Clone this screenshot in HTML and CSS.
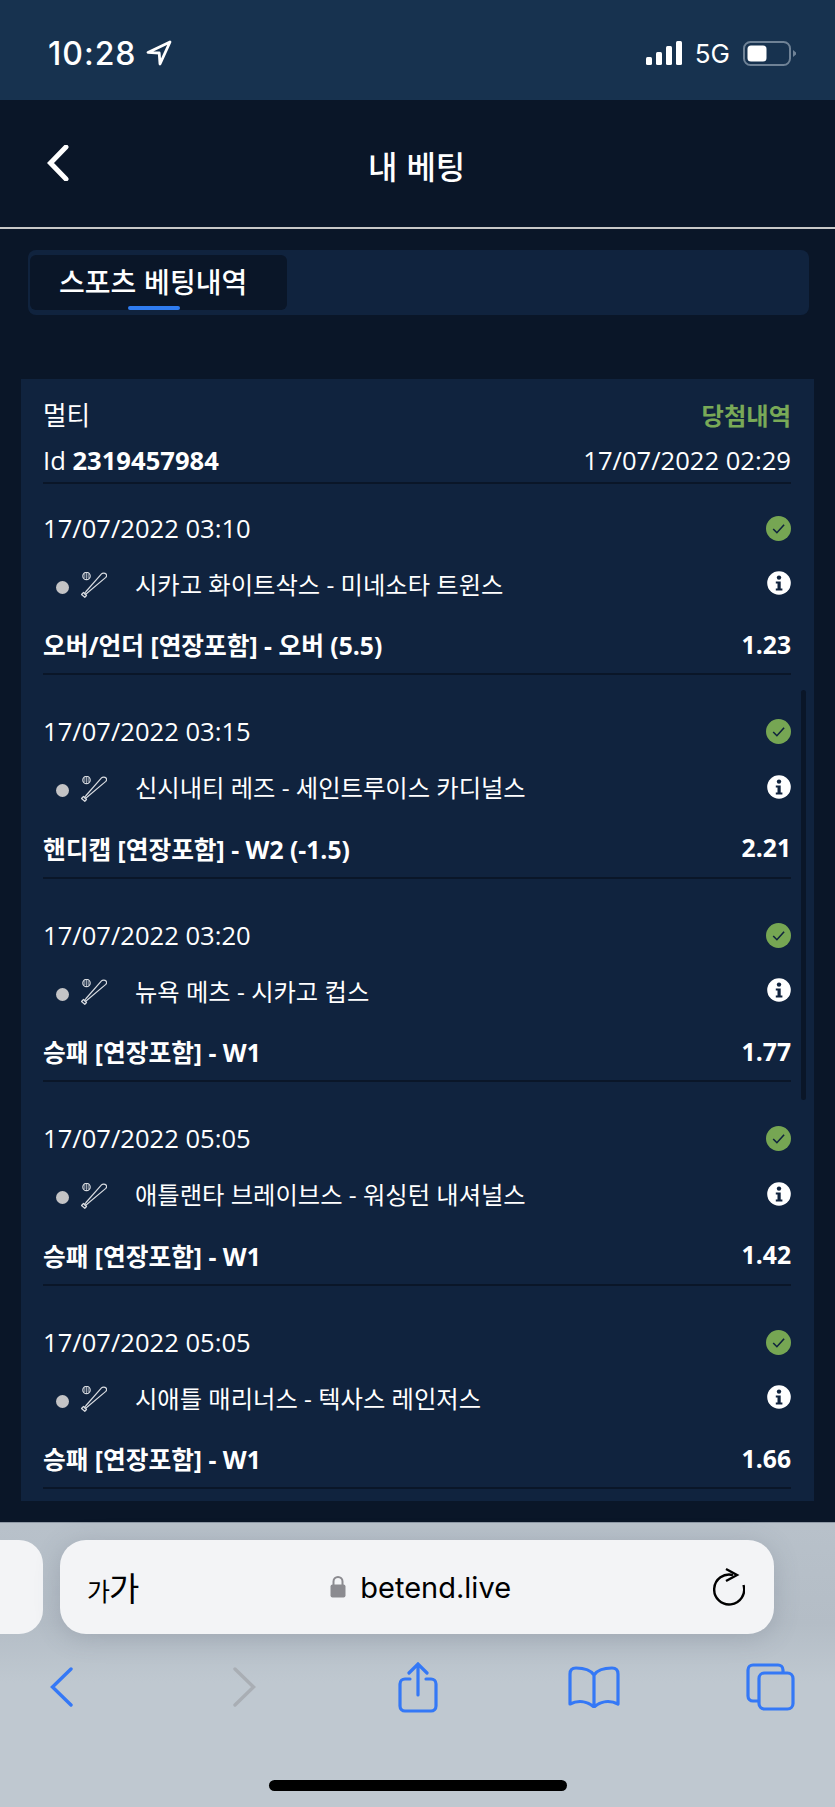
FILE: index.html
```html
<!DOCTYPE html>
<html lang="ko">
<head>
  <meta charset="UTF-8">
  <title>내 베팅</title>
  <link rel="stylesheet" href="styles.css">
</head>
<body>
  <svg class="defs" width="0" height="0">
    <symbol id="bat" viewBox="0 0 26 26">
      <circle cx="5.500" cy="4" r="3.700" fill="none" stroke="#d8dbe0" stroke-width="1.200"/>
      <path d="M5.500 .8v6.400M3.800 1.800v4.400M7.200 1.800v4.400" stroke="#d8dbe0" stroke-width=".7"/>
      <path d="M20.500 1.800C21.500.8 24 .8 25 2c.8 1 .6 2.500-.2 3.400L6.500 20.800l-1.900 1.700-1.100-1.100L5 19.500z" fill="none" stroke="#d8dbe0" stroke-width="1.200" stroke-linejoin="round"/>
      <path d="M2.500 20.500l3 3-1.700 1.800-3.300-2.800z" fill="none" stroke="#d8dbe0" stroke-width="1.200" stroke-linejoin="round"/>
    </symbol>
    <symbol id="check" viewBox="0 0 25 25">
      <circle cx="12.500" cy="12.500" r="12.500" fill="#76a653"/>
      <path d="M7.200 13l3.700 3.700 7.200-8" fill="none" stroke="#10233e" stroke-width="1.600"/>
    </symbol>
    <symbol id="info" viewBox="0 0 24 24">
      <circle cx="12" cy="12" r="11.800" fill="#fff"/>
      <circle cx="12" cy="6.600" r="2.200" fill="#10233e"/>
      <path d="M8.800 10.400h4.900v7h1.700v2.200H8.800v-2.200h1.700v-4.800H8.800z" fill="#10233e"/>
    </symbol>
  </svg>

  <div class="status-bar">
    <div class="status-left">
      <span class="time">10:28</span>
      <svg class="loc" width="26" height="26" viewBox="0 0 26 26"><path d="M24 2L2 12.400l11.200.6.800 11z" fill="none" stroke="#fff" stroke-width="2.800" stroke-linejoin="round"/></svg>
    </div>
    <div class="status-right">
      <svg width="36" height="24" viewBox="0 0 36 24"><rect x="0" y="16" width="6" height="8" rx="1.500" fill="#fff"/><rect x="10" y="11" width="6" height="13" rx="1.500" fill="#fff"/><rect x="20" y="5" width="6" height="19" rx="1.500" fill="#fff"/><rect x="30" y="0" width="6" height="24" rx="1.500" fill="#fff"/></svg>
      <span class="net">5G</span>
      <svg width="53" height="25" viewBox="0 0 53 25"><rect x="1" y="1" width="46" height="23" rx="6.500" fill="none" stroke="#6f8296" stroke-width="2"/><rect x="4.500" y="4.500" width="19" height="16" rx="3.500" fill="#fff"/><path d="M50 9l3 2.500v2L50 16z" fill="#6f8296"/></svg>
    </div>
  </div>

  <div class="nav">
    <svg class="nav-back" width="22" height="36" viewBox="0 0 22 36"><path d="M19 2L3.500 18 19 34" fill="none" stroke="#fff" stroke-width="5" stroke-linecap="round"/></svg>
    <div class="nav-title">내 베팅</div>
  </div>

  <div class="page">
    <div class="tabs">
      <div class="tab">스포츠 베팅내역<span class="tab-bar"></span></div>
    </div>

    <div class="card">
      <div class="scroll-thumb"></div>
      <div class="card-row type-row">
        <span>멀티</span>
        <span class="won">당첨내역</span>
      </div>
      <div class="card-row id-row">
        <span>Id <b>2319457984</b></span>
        <span>17/07/2022 02:29</span>
      </div>

      <div class="bet">
        <div class="bet-row date-row"><span>17/07/2022 03:10</span><svg class="status-icon"><use href="#check"/></svg></div>
        <div class="bet-row match">
          <span class="dot"></span><svg class="bat"><use href="#bat"/></svg>
          <span class="teams">시카고 화이트삭스 - 미네소타 트윈스</span>
          <svg class="info-icon"><use href="#info"/></svg>
        </div>
        <div class="bet-row market"><span>오버/언더 [연장포함] - 오버 (5.5)</span><span>1.23</span></div>
      </div>

      <div class="bet">
        <div class="bet-row date-row"><span>17/07/2022 03:15</span><svg class="status-icon"><use href="#check"/></svg></div>
        <div class="bet-row match">
          <span class="dot"></span><svg class="bat"><use href="#bat"/></svg>
          <span class="teams">신시내티 레즈 - 세인트루이스 카디널스</span>
          <svg class="info-icon"><use href="#info"/></svg>
        </div>
        <div class="bet-row market"><span>핸디캡 [연장포함] - W2 (-1.5)</span><span>2.21</span></div>
      </div>

      <div class="bet">
        <div class="bet-row date-row"><span>17/07/2022 03:20</span><svg class="status-icon"><use href="#check"/></svg></div>
        <div class="bet-row match">
          <span class="dot"></span><svg class="bat"><use href="#bat"/></svg>
          <span class="teams">뉴욕 메츠 - 시카고 컵스</span>
          <svg class="info-icon"><use href="#info"/></svg>
        </div>
        <div class="bet-row market"><span>승패 [연장포함] - W1</span><span>1.77</span></div>
      </div>

      <div class="bet">
        <div class="bet-row date-row"><span>17/07/2022 05:05</span><svg class="status-icon"><use href="#check"/></svg></div>
        <div class="bet-row match">
          <span class="dot"></span><svg class="bat"><use href="#bat"/></svg>
          <span class="teams">애틀랜타 브레이브스 - 워싱턴 내셔널스</span>
          <svg class="info-icon"><use href="#info"/></svg>
        </div>
        <div class="bet-row market"><span>승패 [연장포함] - W1</span><span>1.42</span></div>
      </div>

      <div class="bet">
        <div class="bet-row date-row"><span>17/07/2022 05:05</span><svg class="status-icon"><use href="#check"/></svg></div>
        <div class="bet-row match">
          <span class="dot"></span><svg class="bat"><use href="#bat"/></svg>
          <span class="teams">시애틀 매리너스 - 텍사스 레인저스</span>
          <svg class="info-icon"><use href="#info"/></svg>
        </div>
        <div class="bet-row market"><span>승패 [연장포함] - W1</span><span>1.66</span></div>
      </div>
    </div>
  </div>

  <div class="browser">
    <div class="address-row">
      <div class="prev-pill"></div>
      <div class="address">
        <span class="aa"><span class="aa-small">가</span>가</span>
        <div class="url">
          <svg width="16" height="24" viewBox="0 0 16 24"><path d="M3.500 10V6.500a4.500 4.500 0 0 1 9 0V10" fill="none" stroke="#8b8b90" stroke-width="2"/><rect x="0.500" y="9.500" width="15" height="13" rx="2" fill="#8b8b90"/></svg>
          <span>betend.live</span>
        </div>
        <svg width="32" height="40" viewBox="0 0 32 40"><path d="M20 8A15 15 0 1 0 30.500 18" fill="none" stroke="#000" stroke-width="2.400"/><path d="M13 2l11 6-11 6" fill="none" stroke="#000" stroke-width="2.400"/></svg>
      </div>
    </div>
    <div class="toolbar">
      <svg class="tool-back" width="23" height="40" viewBox="0 0 23 40"><path d="M21 2L2.500 20 21 38" fill="none" stroke="#3478f6" stroke-width="3.400" stroke-linecap="round"/></svg>
      <svg class="tool-forward" width="23" height="40" viewBox="0 0 23 40"><path d="M2 2l18.500 18L2 38" fill="none" stroke="#a9aeb4" stroke-width="3.400" stroke-linecap="round"/></svg>
      <svg class="tool-share" width="40" height="51" viewBox="0 0 40 51"><path d="M12 17H7a5 5 0 0 0-5 5v22a5 5 0 0 0 5 5h26a5 5 0 0 0 5-5V22a5 5 0 0 0-5-5h-5M20 33V2M11 11l9-9 9 9" fill="none" stroke="#3478f6" stroke-width="3.200" stroke-linecap="round"/></svg>
      <svg class="tool-book" width="52" height="42" viewBox="0 0 52 42"><path d="M26 9C22 3 14 2 8 2 4 2 2 4 2 8v30c8-4 17-3 24 3 7-6 16-7 24-3V8c0-4-2-6-6-6-6 0-14 1-18 7zM26 9v31" fill="none" stroke="#3478f6" stroke-width="3.200" stroke-linejoin="round"/></svg>
      <svg class="tool-tabs" width="49" height="48" viewBox="0 0 49 48"><path d="M37 9V7a5 5 0 0 0-5-5H7a5 5 0 0 0-5 5v26a5 5 0 0 0 5 5h5" fill="none" stroke="#3478f6" stroke-width="3.200"/><rect x="13" y="10" width="34" height="36" rx="5.500" fill="none" stroke="#3478f6" stroke-width="3.200"/></svg>
    </div>
    <div class="home-indicator"></div>
  </div>
</body>
</html>
```

FILE: styles.css
```css
* {
  box-sizing: border-box;
}
html, body {
  margin: 0;
  height: 1807px;
  overflow: hidden;
}
body {
  display: flex;
  flex-direction: column;
  background-color: #0a1628;
  color: #fff;
  font-family: "Open Sans", "Noto Sans CJK KR", sans-serif;
  font-size: 25.6px;
}
svg {
  display: block;
  flex: none;
}
.defs {
  position: absolute;
}

.status-bar {
  height: 100px;
  background-color: #17324f;
  display: flex;
  align-items: center;
  justify-content: space-between;
  padding: 6px 39px 0 48px;
}
.status-left, .status-right {
  display: flex;
  align-items: center;
}
.time {
  font-family: Inter, sans-serif;
  font-size: 32px;
  font-weight: 500;
  letter-spacing: 1px;
}
.loc {
  margin-left: 9px;
}
.net {
  font-family: Inter, sans-serif;
  font-size: 26px;
  margin: 0 13px;
}

.nav {
  height: 129px;
  display: flex;
  align-items: center;
  padding-left: 47px;
  border-bottom: 2px solid #c8c8c8;
}
.nav-title {
  margin-left: 299px;
  font-family: "Noto Sans CJK KR", sans-serif;
  font-size: 32px;
  font-weight: 500;
  padding-top: 2px;
}
.nav-back {
  margin-top: -2px;
}

.page {
  flex: none;
  height: 1293px;
  padding: 21px 21px 0;
}
.tabs {
  height: 65px;
  margin: 0 5px 0 7px;
  padding: 5px 2px;
  background-color: #10233e;
  border-radius: 8px;
}
.tab {
  position: relative;
  width: 257px;
  height: 55px;
  padding-left: 29px;
  background-color: #0a1628;
  border-radius: 6px;
  font-family: "Noto Sans CJK KR", sans-serif;
  font-size: 28px;
  font-weight: 500;
  line-height: 53px;
}
.tab-bar {
  position: absolute;
  left: 98px;
  bottom: 0;
  width: 52px;
  height: 4px;
  border-radius: 2px;
  background-color: #2f7cf0;
}

.card {
  position: relative;
  margin-top: 64px;
  height: 1122px;
  padding: 16px 23px 12px 22px;
  background-color: #10233e;
}
.scroll-thumb {
  position: absolute;
  right: 8px;
  top: 311px;
  width: 5px;
  height: 410px;
  border-radius: 3px;
  background-color: #0a1628;
}
.card-row, .bet-row {
  display: flex;
  align-items: center;
  justify-content: space-between;
  height: 40px;
  padding-bottom: 4px;
}
.type-row, .date-row {
  padding-bottom: 2px;
}
.won {
  color: #79a957;
  font-weight: 700;
  font-size: 24.300px;
}
.id-row {
  margin-top: 7px;
  height: 42px;
  border-bottom: 2px solid #0a1628;
}
.id-row b {
  font-weight: 700;
}

.bet {
  padding: 24px 0 7px;
  margin-top: 1px;
  border-bottom: 2px solid #0a1628;
}
.bet + .bet {
  margin-top: 0;
  padding-top: 37.500px;
}
.status-icon {
  width: 25px;
  height: 25px;
}
.match {
  margin-top: 16px;
  justify-content: flex-start;
  font-size: 24.300px;
}
.dot {
  width: 13px;
  height: 13px;
  margin: 8px 12px 0 13px;
  border-radius: 50%;
  background-color: #c4c4c6;
}
.bat {
  width: 26px;
  height: 26px;
  margin-top: 4px;
}
.teams {
  margin-left: 28px;
}
.info-icon {
  width: 24px;
  height: 24px;
  margin-left: auto;
}
.market {
  margin-top: 21px;
  font-weight: 700;
  font-size: 24.700px;
}

.browser {
  flex: 1;
  background: linear-gradient(#b8c1ca, #b4bdc6 100px, #bfc8d0 160px);
  padding-top: 17px;
  border-top: 1px solid #8f99a5;
}
.address-row {
  display: flex;
  gap: 17px;
}
.prev-pill {
  width: 43px;
  height: 94px;
  background-color: #f3f4f6;
  border-radius: 0 24px 24px 0;
}
.address {
  width: 714px;
  height: 94px;
  display: flex;
  align-items: center;
  justify-content: space-between;
  padding: 0 29px 0 27px;
  background-color: #f3f4f6;
  border-radius: 26px;
  box-shadow: 0 4px 24px rgba(90, 100, 115, 0.25);
  color: #000;
}
.aa {
  font-family: "Noto Sans CJK KR", sans-serif;
  font-size: 33px;
  font-weight: 400;
  letter-spacing: -1px;
}
.aa-small {
  font-size: 25px;
}
.url {
  display: flex;
  align-items: center;
  gap: 14px;
  margin-left: -10px;
  font-family: Inter, sans-serif;
  font-size: 29px;
}
.toolbar {
  display: flex;
  align-items: center;
  height: 52px;
  margin-top: 27px;
  padding-left: 50px;
}
.tool-forward {
  margin-left: 160px;
}
.tool-share {
  margin-left: 142px;
}
.tool-book {
  margin-left: 130px;
}
.tool-tabs {
  margin-left: 126px;
}
.home-indicator {
  width: 298px;
  height: 11px;
  margin: 67px auto 0;
  border-radius: 6px;
  background-color: #000;
}
```
